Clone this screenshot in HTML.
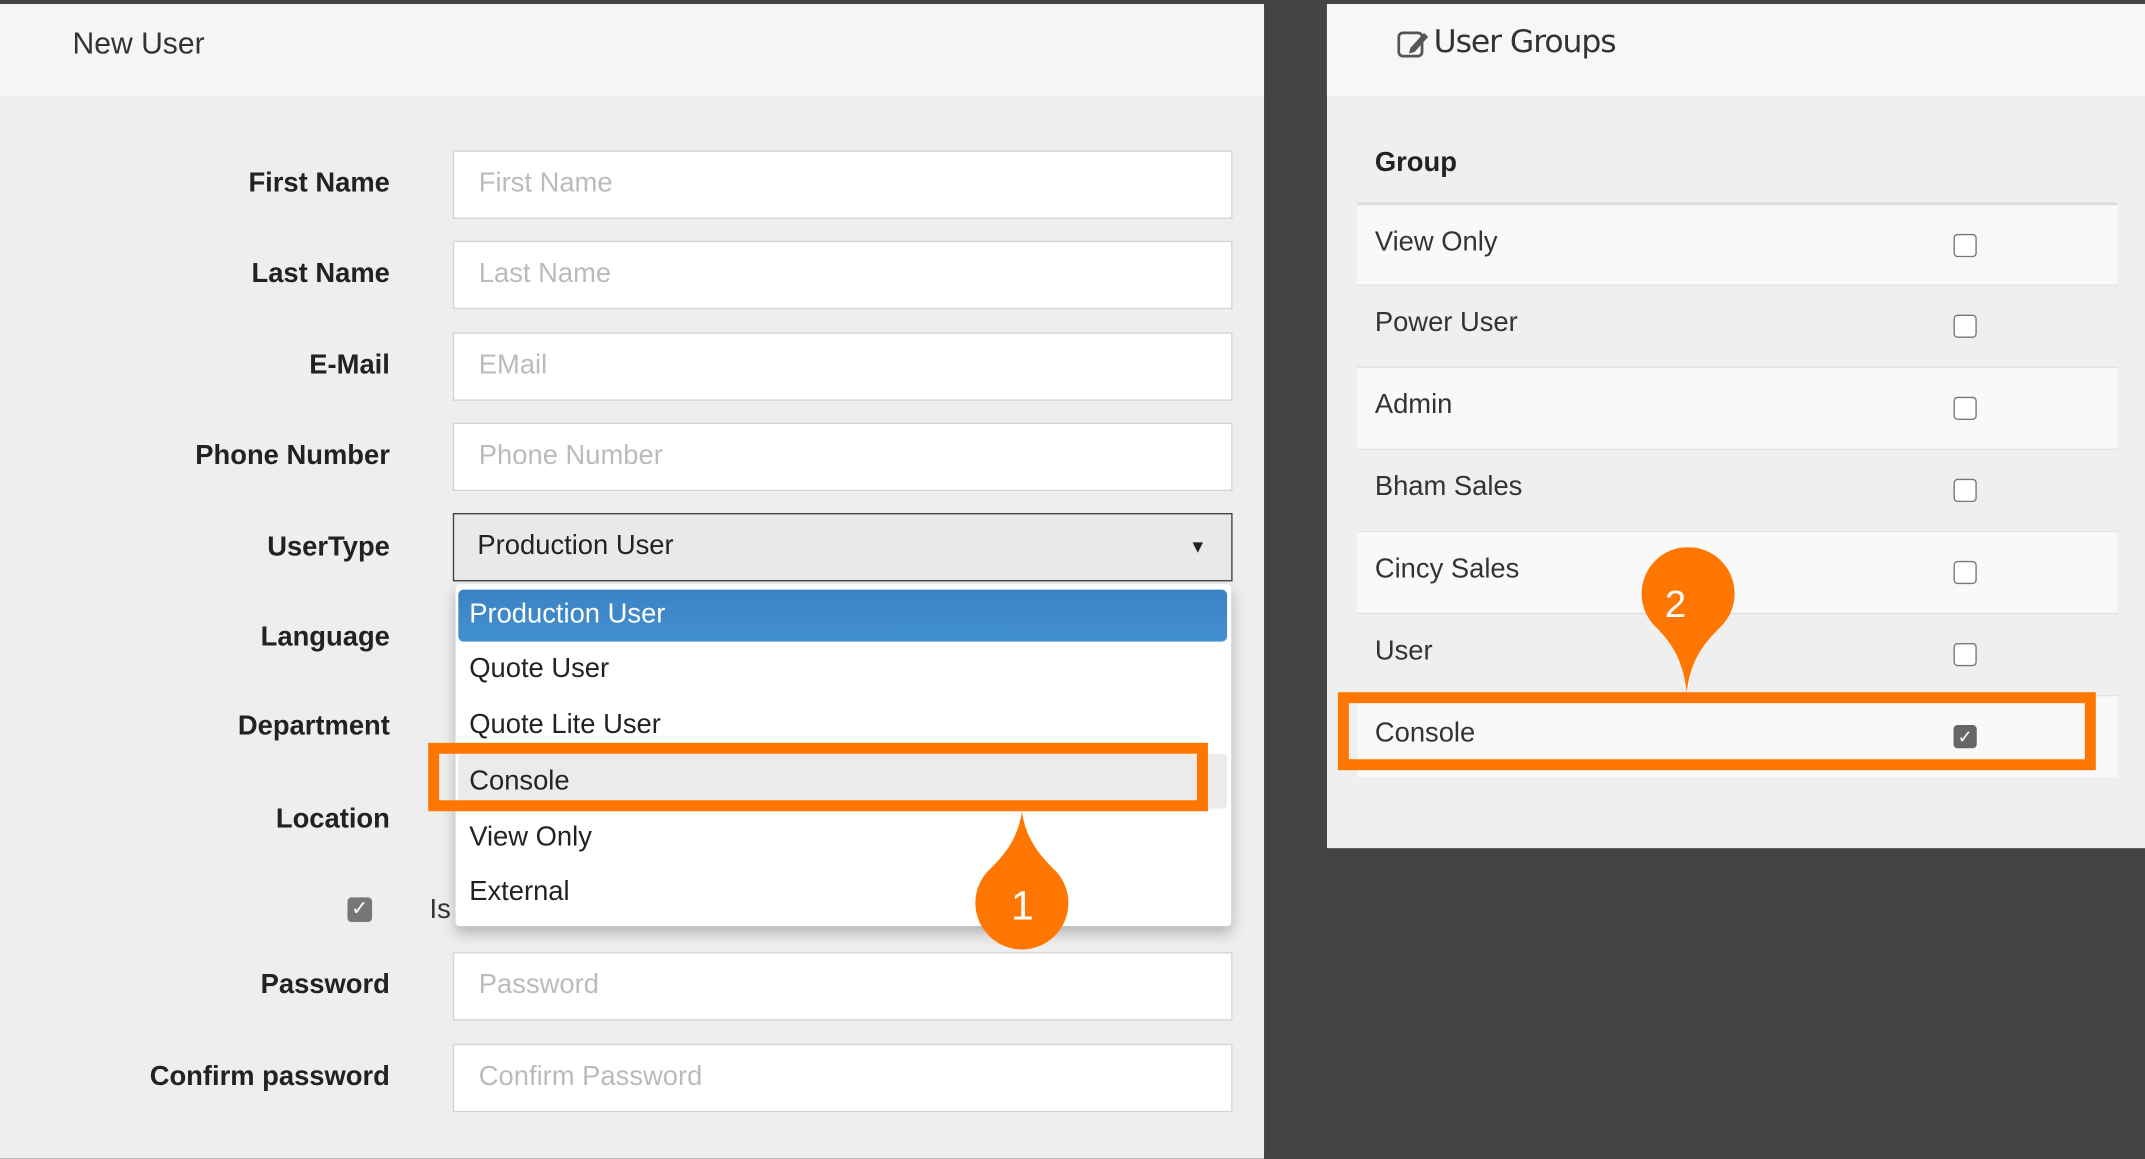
<!DOCTYPE html>
<html><head><meta charset="utf-8"><style>
html,body{margin:0;padding:0;background:#444;width:2145px;height:1159px;overflow:hidden}
#s{position:absolute;left:0;top:0;width:1568px;height:847px;transform:scale(1.368);transform-origin:0 0;font-family:"Liberation Sans",Arial,sans-serif}
.a{position:absolute}
.lbl{position:absolute;right:1283px;font-weight:bold;font-size:20px;color:#222;width:250px;text-align:right}
.in{position:absolute;left:331px;width:568px;height:48px;background:#fff;border:1px solid #d4d4d4;box-sizing:content-box}
.in span{position:absolute;left:18px;top:12px;font-size:20px;color:#bbb}
.opt{position:absolute;left:343px;font-size:20px;color:#222}
.row{position:absolute;left:992px;width:556px;height:59px;border-top:1px solid #e2e2e2}
.row span{position:absolute;left:13px;top:16px;font-size:20px;color:#333}
.cb{position:absolute;left:436px;top:21px;width:15px;height:15px;border:1.5px solid #777;border-radius:3px;background:#fff}
</style></head><body><div id="s">
<div class="a" style="left:0;top:3px;width:924px;height:844px;background:#eee"></div>
<div class="a" style="left:0;top:3px;width:924px;height:67px;background:#f6f6f6"></div>
<div class="a" style="left:53px;top:19px;font-size:22px;color:#333">New User</div>

<div class="lbl" style="top:123px">First Name</div>
<div class="in" style="top:110px"><span>First Name</span></div>
<div class="lbl" style="top:189px">Last Name</div>
<div class="in" style="top:176px"><span>Last Name</span></div>
<div class="lbl" style="top:256px">E-Mail</div>
<div class="in" style="top:243px"><span>EMail</span></div>
<div class="lbl" style="top:322px">Phone Number</div>
<div class="in" style="top:309px"><span>Phone Number</span></div>
<div class="lbl" style="top:389px">UserType</div>
<div class="a" style="left:331px;top:375px;width:568px;height:48px;background:#e9e9e9;border:1px solid #444"><span style="position:absolute;left:17px;top:12px;font-size:20px;color:#222">Production User</span><span style="position:absolute;right:18px;top:16px;font-size:13px;color:#222">▼</span></div>
<div class="lbl" style="top:455px">Language</div>
<div class="lbl" style="top:520px">Department</div>
<div class="lbl" style="top:588px">Location</div>
<div class="a" style="left:254px;top:656px;width:18px;height:18px;background:#777;border-radius:3px;color:#fff;font-size:15px;text-align:center;line-height:18px">✓</div>
<div class="a" style="left:314px;top:654px;font-size:20px;color:#333">Is</div>
<div class="lbl" style="top:709px">Password</div>
<div class="in" style="top:696px"><span>Password</span></div>
<div class="lbl" style="top:776px">Confirm password</div>
<div class="in" style="top:763px"><span>Confirm Password</span></div>

<div class="a" style="left:333px;top:427px;width:567px;height:250px;background:#fff;border-radius:3px;box-shadow:0 5px 10px rgba(0,0,0,.25)"></div>
<div class="a" style="left:335px;top:431px;width:562px;height:38px;background:linear-gradient(#3b82c4,#4290d0);border-radius:4px"></div>
<div class="opt" style="top:438px;color:#fff">Production User</div>
<div class="opt" style="top:478px">Quote User</div>
<div class="opt" style="top:519px">Quote Lite User</div>
<div class="a" style="left:335px;top:551px;width:562px;height:40px;background:#ebebeb;border-radius:3px"></div>
<div class="opt" style="top:560px">Console</div>
<div class="opt" style="top:601px">View Only</div>
<div class="opt" style="top:641px">External</div>
<div class="a" style="left:313px;top:543px;width:570px;height:50px;box-sizing:border-box;border:8px solid #ff7700"></div>
<svg class="a" style="left:700px;top:593px" width="95" height="110"><path d="M47 0 C50 22 62 34 72 44 A34 34 0 1 1 22 44 C32 34 44 22 47 0 Z" fill="#ff7700"/><text x="39" y="79" font-size="30" fill="#fff" font-family="Liberation Sans">1</text></svg>

<div class="a" style="left:970px;top:3px;width:598px;height:617px;background:#efefef"></div>
<div class="a" style="left:970px;top:3px;width:598px;height:67px;background:#f7f7f7"></div>
<svg class="a" style="left:1021px;top:20px" width="26" height="24"><rect x="1.5" y="4" width="17" height="17" rx="3" fill="none" stroke="#555" stroke-width="2"/><path d="M10 15 L20 4 L23 7 L13 18 L9 19 Z" fill="#555"/></svg>
<div class="a" style="left:1048px;top:18px;font-size:23px;color:#333;font-family:'DejaVu Sans',sans-serif;letter-spacing:-.8px">User Groups</div>
<div class="a" style="left:1005px;top:108px;font-size:20px;font-weight:bold;color:#222">Group</div>
<div class="row" style="top:148px;background:#f9f9f9;border-top:2px solid #ddd"><span>View Only</span><div class="cb"></div></div>
<div class="row" style="top:208px;background:#efefef"><span>Power User</span><div class="cb"></div></div>
<div class="row" style="top:268px;background:#f9f9f9"><span>Admin</span><div class="cb"></div></div>
<div class="row" style="top:328px;background:#efefef"><span>Bham Sales</span><div class="cb"></div></div>
<div class="row" style="top:388px;background:#f9f9f9"><span>Cincy Sales</span><div class="cb"></div></div>
<div class="row" style="top:448px;background:#efefef"><span>User</span><div class="cb"></div></div>
<div class="row" style="top:508px;background:#f9f9f9"><span>Console</span><div class="cb" style="background:#666;border-color:#666;color:#fff;font-size:13px;text-align:center;line-height:15px">✓</div></div>
<div class="a" style="left:978px;top:506px;width:554px;height:57px;box-sizing:border-box;border:8px solid #ff7700"></div>
<svg class="a" style="left:1185px;top:400px" width="95" height="110"><path d="M48 106 C45 80 35 68 25 58 A34 34 0 1 1 73 58 C63 68 51 80 48 106 Z" fill="#ff7700"/><text x="32" y="51" font-size="28" fill="#fff" font-family="Liberation Sans">2</text></svg>
</div></body></html>
